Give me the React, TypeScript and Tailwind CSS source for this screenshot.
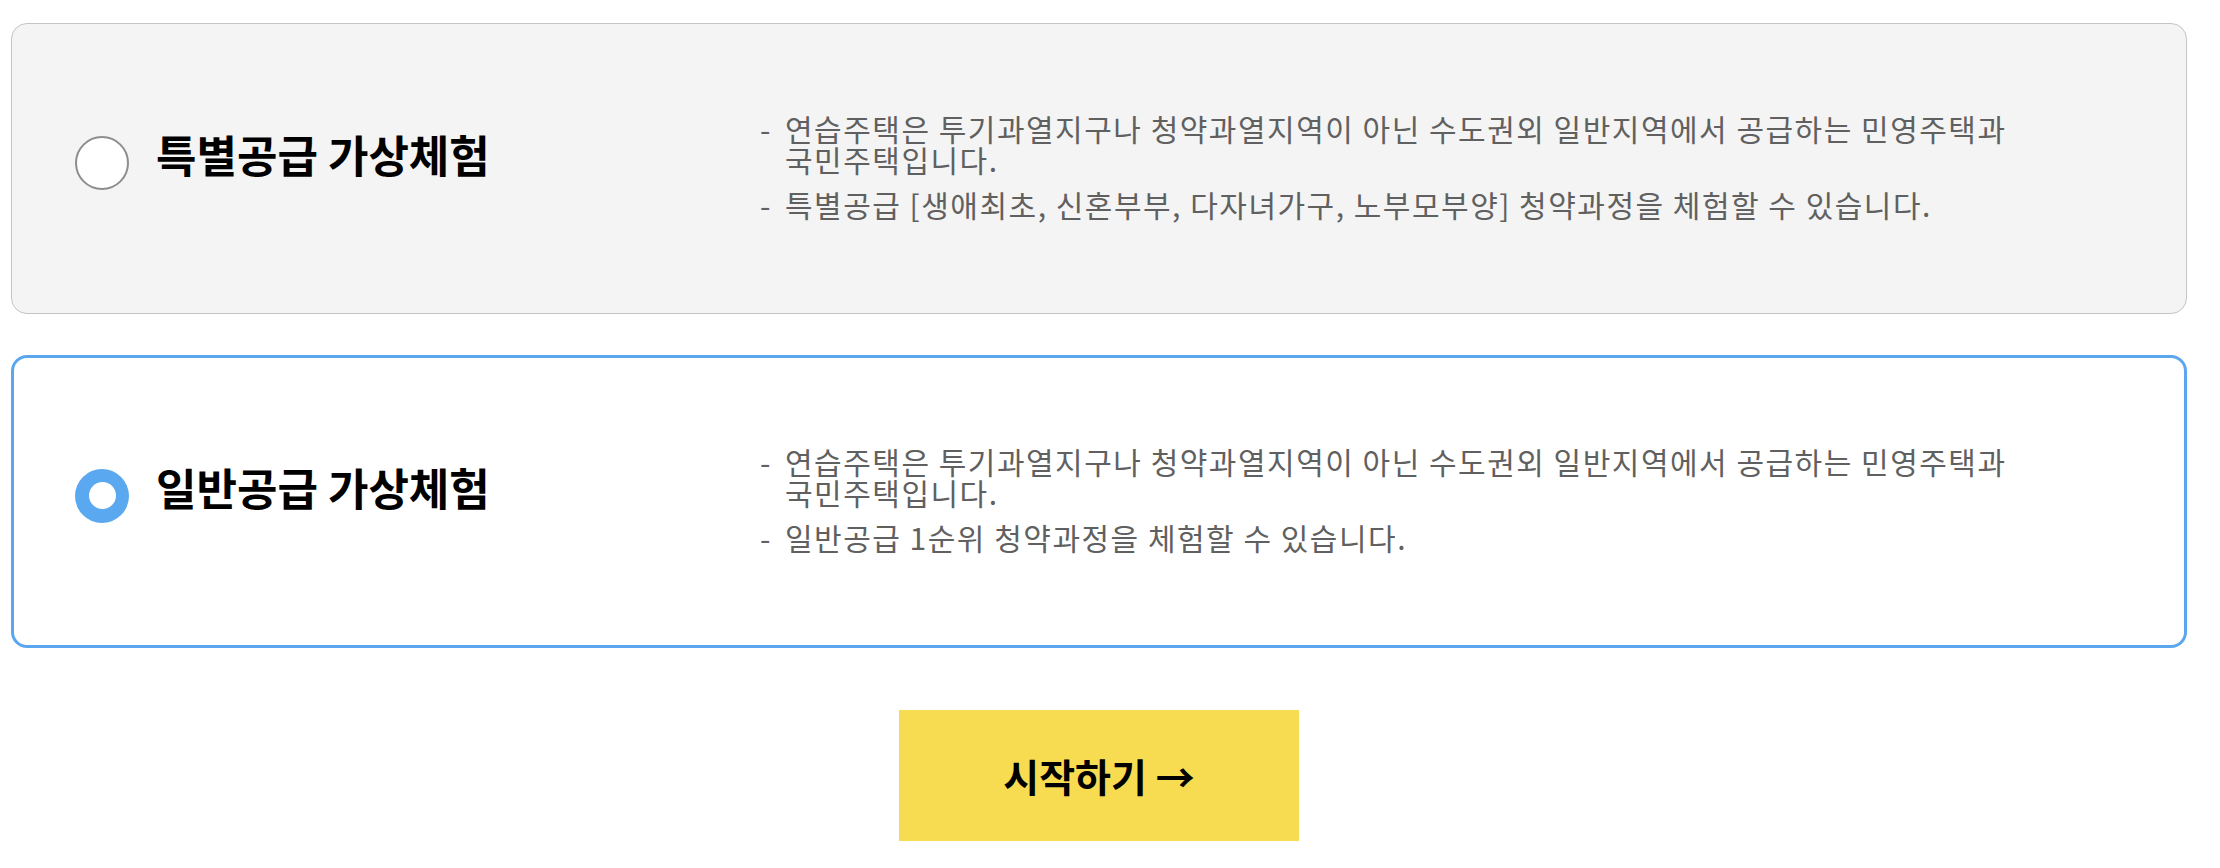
import React from 'react'

const FONT = { fontFamily: '"Noto Sans CJK KR", "Noto Sans", sans-serif' }

type Option = {
  title: string
  lines: string[]
  selected: boolean
}

const options: Option[] = [
  {
    title: '특별공급 가상체험',
    lines: [
      '연습주택은 투기과열지구나 청약과열지역이 아닌 수도권외 일반지역에서 공급하는 민영주택과 국민주택입니다.',
      '특별공급 [생애최초, 신혼부부, 다자녀가구, 노부모부양] 청약과정을 체험할 수 있습니다.',
    ],
    selected: false,
  },
  {
    title: '일반공급 가상체험',
    lines: [
      '연습주택은 투기과열지구나 청약과열지역이 아닌 수도권외 일반지역에서 공급하는 민영주택과 국민주택입니다.',
      '일반공급 1순위 청약과정을 체험할 수 있습니다.',
    ],
    selected: true,
  },
]

function Radio({ selected }: { selected: boolean }) {
  if (selected) {
    return (
      <span className="flex h-[54px] w-[54px] shrink-0 items-center justify-center rounded-full bg-[#5aa8ef]">
        <span className="h-[27px] w-[27px] rounded-full bg-white" />
      </span>
    )
  }
  return <span className="h-[54px] w-[54px] shrink-0 rounded-full border-2 border-[#8d8d8d] bg-white" />
}

function OptionCard({ option }: { option: Option }) {
  const box = option.selected
    ? 'h-[293px] border-[3px] border-[#5aa6ef] bg-white pl-[61px]'
    : 'h-[291px] border border-[#c4c4c4] bg-[#f4f4f4] pl-[63px]'

  return (
    <div className={`flex items-center rounded-[16px] ${box}`}>
      {/* left: radio + title */}
      <div className="flex w-[685px] shrink-0 items-center gap-[27px] pb-3">
        <Radio selected={option.selected} />
        <span className="mb-[18px] text-[44px] font-bold leading-none text-black">
          {option.title}
        </span>
      </div>

      {/* right: description */}
      <ul className="flex w-[1400px] flex-col gap-[14px] pb-[4px] text-[30px] leading-[31px] tracking-[1.5px] text-[#606060] break-keep">
        {option.lines.map((line, i) => (
          <li key={i} className="flex">
            <span className="w-[25px] shrink-0">-</span>
            <span>{line}</span>
          </li>
        ))}
      </ul>
    </div>
  )
}

export default function App() {
  return (
    <div className="min-h-[868px] w-[2220px] bg-white pt-[23px] pl-[11px]" style={FONT}>
      <div className="flex w-[2176px] flex-col">
        <div className="flex flex-col gap-[41px]">
          {options.map((o) => (
            <OptionCard key={o.title} option={o} />
          ))}
        </div>

        <div className="mt-[62px] flex justify-center">
          <button className="flex h-[131px] w-[400px] items-center justify-center bg-[#f7dc52] text-[39px] font-bold text-black">
            시작하기 →
          </button>
        </div>
      </div>
    </div>
  )
}
